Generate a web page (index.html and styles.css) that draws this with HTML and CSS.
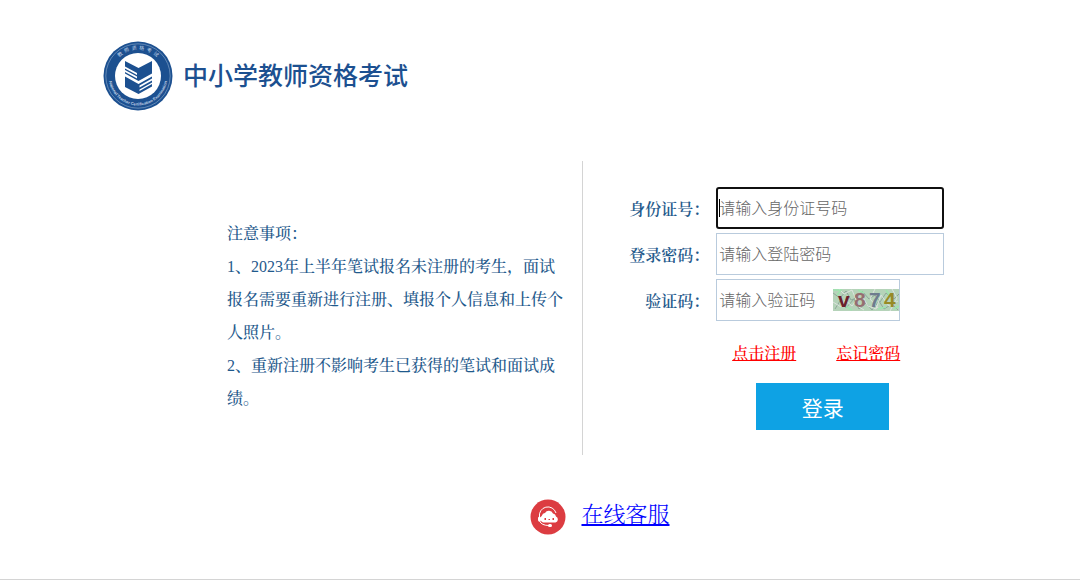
FILE: index.html
```html
<!DOCTYPE html>
<html lang="zh-CN">
<head>
<meta charset="utf-8">
<meta name="viewport" content="width=device-width, initial-scale=1">
<title>中小学教师资格考试</title>
<link rel="stylesheet" href="styles.css">
</head>
<body>
<header class="header">
  <svg class="emblem" viewBox="0 0 70 70" aria-hidden="true">
    <defs>
      <path id="arc-top" d="M8.500 35a26.500 26.500 0 0 1 53 0"/>
      <path id="arc-bottom" d="M5.500 35a29.500 29.500 0 0 0 59 0"/>
    </defs>
    <circle cx="35" cy="35" r="34.500" fill="#1c5090"/>
    <circle cx="35" cy="35" r="32.200" fill="none" stroke="#7fa0c6" stroke-width=".7"/>
    <circle cx="35" cy="35" r="23" fill="#fff"/>
    <text class="emblem-cn"><textPath href="#arc-top" startOffset="50%" text-anchor="middle">教  师  资  格  考  试</textPath></text>
    <text class="emblem-en"><textPath href="#arc-bottom" startOffset="50%" text-anchor="middle">National Teacher Certification Examination</textPath></text>
    <path fill="#1c5090" d="M22 20l13.500 7L49 20v12.500L35.500 40 22 32.500v-1.500l12 6.500v-2L22 29v-1.500l12 6.500v-2L22 25.500z"/>
    <path fill="#1c5090" d="M22 35.500l13.500 7.500L49 35.500v2l-12.500 7v2L49 39.500v2l-12.500 7v1.500L49 43v2.500L35.500 53 22 46z"/>
  </svg>
  <h1 class="site-name">中小学教师资格考试</h1>
</header>

<main class="main">
  <section class="notice">
    <p>注意事项：</p>
    <p>1、2023年上半年笔试报名未注册的考生，面试报名需要重新进行注册、填报个人信息和上传个人照片。</p>
    <p>2、重新注册不影响考生已获得的笔试和面试成绩。</p>
  </section>

  <form class="login">
    <div class="row">
      <label class="label" for="id-number">身份证号：</label>
      <div class="field-wrap">
        <input class="field" id="id-number" type="text" placeholder="请输入身份证号码" autofocus>
        <span class="caret"></span>
      </div>
    </div>
    <div class="row">
      <label class="label" for="password">登录密码：</label>
      <input class="field" id="password" type="password" placeholder="请输入登陆密码">
    </div>
    <div class="row">
      <label class="label" for="captcha">验证码：</label>
      <div class="captcha-box">
        <input class="captcha-input" id="captcha" type="text" placeholder="请输入验证码">
        <svg class="captcha" viewBox="0 0 66 22" role="img" aria-label="验证码图片">
          <rect width="66" height="22" fill="#b5d3b9"/>
          <path stroke="#8fa79a" fill="none" d="M0 4l7 5 6-7 5 9 8-3 3-6 7 8 6-4 5 7 6-9 8 6 5-5M2 20l5-8 6 7 8-9 5 10 7-6 6 7 7-9 5 8 8-5 6 6"/>
          <path stroke="#dde3df" fill="none" d="M0 13l8 5 4-7 7 6 9-12 7 12 8 3 5-14 8 11 9-5M6 0l5 5 8-4 7 17 5 3M42 0l-5 10 9 10M59 0l5 9-7 13"/>
          <path stroke="#9de5ae" stroke-width="1.500" fill="none" d="M0 1h8l-4 5M12 17l7 4M25 1l6 3M45 20l8-2M53 1l4 6M61 20l5-3"/>
          <text class="captcha-v" x="5" y="18">v</text>
          <text class="captcha-8" x="21" y="18">8</text>
          <text class="captcha-7" x="36" y="18">7</text>
          <text class="captcha-4" x="51" y="18">4</text>
        </svg>
      </div>
    </div>
    <div class="links">
      <a href="#register">点击注册</a>
      <a href="#forgot">忘记密码</a>
    </div>
    <button class="submit" type="submit">登录</button>
  </form>
</main>

<footer class="footer">
  <svg class="service-icon" viewBox="0 0 36 36" aria-hidden="true">
    <circle cx="18" cy="18" r="17.500" fill="#dc3c41"/>
    <path fill="none" stroke="#fff" stroke-width="1" d="M9.500 18a8.500 8.500 0 0 1 16.500-4"/>
    <path fill="#fff" d="M13 23.500a4 4 0 0 1-1-7 3 3 0 0 1 3-2.500 4.500 4.500 0 0 1 8 .5 3.500 3.500 0 0 1 3 3 3.200 3.200 0 0 1-.5 6z"/>
    <rect x="8" y="17.500" width="3" height="5" rx="1.500" fill="#fff"/>
    <path fill="none" stroke="#fff" stroke-width="1" d="M9.500 22q2 4.500 9.500 4.500"/>
    <rect x="18" y="25" width="4" height="3" rx="1.500" fill="#fff"/>
    <path fill="#dc3c41" d="M14.500 19H16v2h-1.500zM18.500 20H20v1h-1.500zM22.500 19H24v2h-1.500z"/>
  </svg>
  <a class="service-link" href="#service">在线客服</a>
</footer>
</body>
</html>
```
FILE: styles.css
```css
* {
  box-sizing: border-box;
}

body {
  margin: 0;
  background: #fff;
  color: #1f5a8c;
  font-family: "Liberation Serif", "Noto Serif CJK SC", "Noto Sans CJK SC", serif;
  font-size: 16px;
}

.header {
  display: flex;
  align-items: center;
  gap: 10px;
  padding: 41px 103px 0;
}

.emblem {
  width: 70px;
  height: 70px;
}

.emblem-cn {
  fill: #c5d5e8;
  font: 5px "Noto Sans CJK SC", sans-serif;
  white-space: pre;
}

.emblem-en {
  fill: #c5d5e8;
  font: bold 4px "Liberation Sans", sans-serif;
}

.site-name {
  margin: 0;
  padding-bottom: 4px;
  color: #1c5090;
  font: 500 25px/36px "Noto Sans CJK SC", sans-serif;
}

.main {
  display: grid;
  grid-template-columns: 54fr 46fr;
  margin-top: 50px;
}

.notice {
  padding: 56px 16px 38px 227px;
  border-right: 1px solid #d4d4d4;
  font-weight: 500;
  line-height: 33px;
}

.notice p {
  margin: 0;
}

.login {
  display: flex;
  flex-direction: column;
  gap: 4px;
  padding: 26px 0 25px 46px;
}

.row {
  display: flex;
  align-items: center;
}

.label {
  flex: none;
  width: 87px;
  padding-right: 7px;
  color: #1f5a8c;
  font-weight: 600;
  text-align: right;
  white-space: nowrap;
}

.field-wrap {
  display: flex;
  position: relative;
}

.caret {
  position: absolute;
  top: 12px;
  left: 3px;
  width: 1px;
  height: 18px;
  background: #000;
}

.field,
.captcha-box {
  height: 42px;
  border: 1px solid #b9cbdd;
  background: #fff;
}

.field,
.captcha-input {
  padding: 1px 2px 0;
  color: #333;
  font: 16px "Liberation Sans", "Noto Sans CJK SC", sans-serif;
}

.field {
  width: 228px;
}

.field::placeholder,
.captcha-input::placeholder {
  color: #666;
  font-weight: 300;
}

.field:focus {
  border: 2px solid #101010;
  border-radius: 3px;
  outline: 0;
  padding: 1px 1px 0;
  caret-color: transparent;
}

.captcha-box {
  display: flex;
  align-items: center;
  width: 184px;
}

.captcha-input {
  flex: 1;
  min-width: 0;
  height: 40px;
  border: 0;
}

.captcha {
  flex: none;
  width: 66px;
  height: 22px;
  overflow: visible;
}

.captcha text {
  font: bold 21px "Liberation Sans", sans-serif;
}

.captcha-v {
  fill: #6c202c;
}

.captcha-8 {
  fill: #956f71;
}

.captcha-7 {
  fill: #6e7c8e;
}

.captcha-4 {
  fill: #978a27;
}

.links {
  display: flex;
  gap: 40px;
  padding: 17px 0 13px 103px;
  line-height: 24px;
}

.links a {
  color: #f00;
  font-weight: 500;
}

.submit {
  width: 133px;
  height: 47px;
  margin-left: 127px;
  border: 0;
  background: #0ea2e4;
  color: #fff;
  font: 21px "Liberation Sans", "Noto Sans CJK SC", sans-serif;
}

.footer {
  display: flex;
  justify-content: center;
  gap: 15px;
  padding: 44px 0 44px 120px;
  border-bottom: 1px solid #d4d4d4;
}

.service-icon {
  width: 36px;
  height: 36px;
}

.service-link {
  color: #00f;
  font-size: 22px;
  font-weight: 300;
  line-height: 32px;
}
```
